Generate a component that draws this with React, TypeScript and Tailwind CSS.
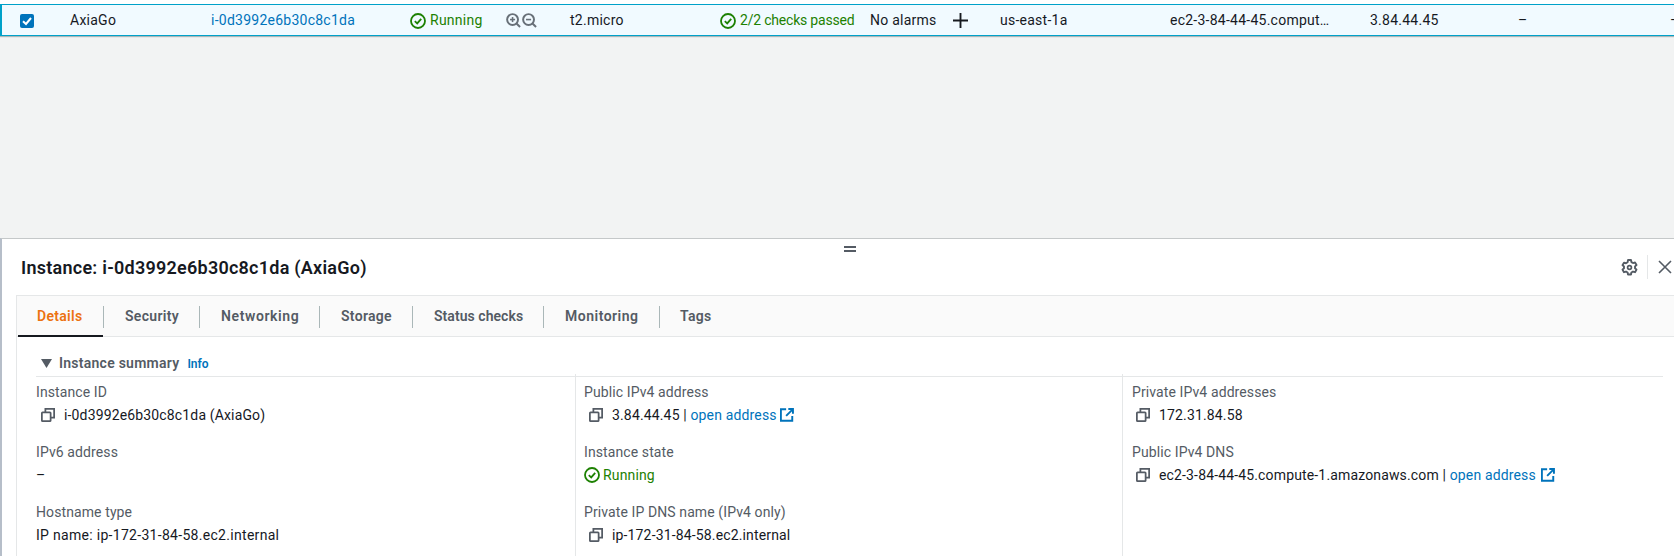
import React from "react";

function CheckCircle({ className = "" }: { className?: string }) {
  return (
    <svg viewBox="0 0 16 16" className={className} fill="none" stroke="currentColor" strokeWidth="1.8">
      <circle cx="8" cy="8" r="7" />
      <path d="M4.8 8.2 7.2 10.4 11.2 5.8" strokeWidth="1.8" />
    </svg>
  );
}

function Zoom({ minus }: { minus?: boolean }) {
  return (
    <svg viewBox="0 0 16 16" className="w-[15px] h-[15px] text-[#687078]" fill="none" stroke="currentColor" strokeWidth="2.1">
      <circle cx="7" cy="7" r="5.8" />
      <path d="M11.2 11.2 15 15" />
      <path d="M4.3 7h5.4" strokeWidth="1.7" />
      {!minus && <path d="M7 4.3v5.4" strokeWidth="1.7" />}
    </svg>
  );
}

function Copy() {
  return (
    <svg viewBox="0 0 16 16" className="w-[14px] h-[14px] text-[#545b64] shrink-0" fill="none" stroke="currentColor" strokeWidth="2">
      <rect x="1" y="5" width="10" height="10" rx="0.8" />
      <path d="M5 5V1h10v10h-4" />
    </svg>
  );
}

function External() {
  return (
    <svg viewBox="0 0 16 16" className="w-[14px] h-[14px] text-[#0073bb] shrink-0" fill="none" stroke="currentColor" strokeWidth="2.2">
      <path d="M7 1.5H1v13h13V9" />
      <path d="M9.5 1.2h5.3v5.3" />
      <path d="M14.5 1.5 7 9" />
    </svg>
  );
}

function Field({ label, children, tight }: { label: string; children: React.ReactNode; tight?: boolean }) {
  return (
    <div className="h-[60px]">
      <div className="h-[22px] leading-[22px] text-[#545b64] text-[14px] tracking-[0.1px]">{label}</div>
      <div className={`h-[24px] leading-[24px] text-[14px] text-[#16191f] flex items-center whitespace-nowrap ${tight ? "tracking-[0.3px]" : "tracking-[0.15px]"}`}>
        {children}
      </div>
    </div>
  );
}

function CopyValue({ children, pad }: { children: React.ReactNode; pad: string }) {
  return (
    <div className={`flex items-center ${pad}`}>
      <Copy />
      <span className="ml-[9px]">{children}</span>
    </div>
  );
}

const tabs = [
  { name: "Security", cls: "w-[95px] tracking-[0.3px]" },
  { name: "Networking", cls: "w-[119px] tracking-[0.6px]" },
  { name: "Storage", cls: "w-[92px] tracking-[0.3px]" },
  { name: "Status checks", cls: "w-[130px] tracking-[0.05px]" },
  { name: "Monitoring", cls: "w-[115px] tracking-[0.5px]" },
];

export default function App() {
  return (
    <div className="w-[1674px] h-[556px] overflow-hidden bg-[#f2f3f3] flex flex-col font-[Roboto,sans-serif] text-[14px] text-[#16191f]">
      <div className="h-[4px] bg-white shrink-0" />
      <div className="h-[32px] shrink-0 pt-[1px] grid grid-cols-[68px_141px_199px_160px_150px_150px_130px_170px_200px_148px_152px_4px] items-center bg-[#f1faff] border-y border-l-2 border-[#00a1c9] shadow-[0_1px_1px_#aab7b8] whitespace-nowrap tracking-[0.25px]">
        <div className="pl-[18px]">
          <div className="w-[14px] h-[14px] rounded-[2px] bg-[#0073bb] flex items-center justify-center">
            <svg viewBox="0 0 14 14" className="w-[14px] h-[14px]" fill="none" stroke="white" strokeWidth="2">
              <path d="M3 7.2 6 10 11 4" />
            </svg>
          </div>
        </div>
        <div>AxiaGo</div>
        <div className="text-[#0073bb]">i-0d3992e6b30c8c1da</div>
        <div className="flex items-center">
          <div className="w-[96px] flex items-center text-[#1d8102]">
            <CheckCircle className="w-[16px] h-[16px]" />
            <span className="ml-[4px]">Running</span>
          </div>
          <div className="flex items-center gap-[1px]">
            <Zoom />
            <Zoom minus />
          </div>
        </div>
        <div>t2.micro</div>
        <div className="w-[135px] overflow-hidden flex items-center text-[#1d8102] tracking-[-0.2px]">
          <CheckCircle className="w-[16px] h-[16px] shrink-0" />
          <span className="ml-[4px]">2/2 checks passed</span>
        </div>
        <div className="flex items-center">
          <span className="w-[83px]">No alarms</span>
          <svg viewBox="0 0 16 16" className="w-[15px] h-[15px]" fill="none" stroke="#16191f" strokeWidth="2">
            <path d="M0 8h16M8 0v16" />
          </svg>
        </div>
        <div>us-east-1a</div>
        <div>ec2-3-84-44-45.comput…</div>
        <div>3.84.44.45</div>
        <div>–</div>
        <div>–</div>
      </div>

      <div className="flex-1" />

      <div className="h-[318px] shrink-0 bg-white border-t border-[#c5c8c9] border-l-2 border-l-[#b6bec9] flex flex-col relative">
        <div className="absolute left-[842px] top-[7px] w-[12px] h-[6px] border-y-2 border-[#545b64]" />
        <div className="h-[56px] shrink-0 flex items-center pl-[19px] pr-[2px]">
          <div className="flex-1 text-[18px] font-semibold tracking-[0.25px]">Instance: i-0d3992e6b30c8c1da (AxiaGo)</div>
          <svg viewBox="0 0 16 16" className="w-[17px] h-[17px] text-[#545b64]" fill="none" stroke="currentColor">
            <path strokeWidth="1.8" strokeLinejoin="round" d="M6.6 1h2.8l.4 1.9 1.5.9 1.9-.6 1.4 2.4-1.4 1.3v1.8l1.4 1.3-1.4 2.4-1.9-.6-1.5.9-.4 1.9H6.6l-.4-1.9-1.5-.9-1.9.6-1.4-2.4 1.4-1.3V7.1L1.4 5.8l1.4-2.4 1.9.6 1.5-.9z" />
            <circle cx="8" cy="8" r="1.8" strokeWidth="1.6" />
          </svg>
          <div className="w-px h-[24px] bg-[#e5e7e8] ml-[9px] mr-[10px]" />
          <svg viewBox="0 0 14 14" className="w-[14px] h-[14px] text-[#545b64]" fill="none" stroke="currentColor" strokeWidth="1.6">
            <path d="M1 1l12 12M13 1 1 13" />
          </svg>
        </div>

        <div className="flex-1 ml-[14px] border-l border-[#e5e7e8] flex flex-col">
          <div className="h-[42px] shrink-0 bg-[#fafafa] border-y border-[#e5e7e8] flex items-center pt-[1px] font-semibold text-[#545b64] tracking-[0.3px]">
            <div className="relative h-full flex items-center pl-[20px] w-[86px] text-[#ec7211]">
              Details
              <div className="absolute left-[1px] right-0 bottom-[-1px] h-[2px] bg-[#16191f]" />
            </div>
            {tabs.map((t) => (
              <React.Fragment key={t.name}>
                <div className="w-px h-[22px] bg-[#aab7b8] shrink-0" />
                <div className={`pl-[21px] whitespace-nowrap ${t.cls}`}>{t.name}</div>
              </React.Fragment>
            ))}
            <div className="w-px h-[22px] bg-[#aab7b8] shrink-0" />
            <div className="pl-[20px]">Tags</div>
          </div>

          <div className="ml-[19px] mr-[11px] flex-1 flex flex-col">
            <div className="h-[40px] shrink-0 flex items-center border-b border-[#e5e7e8] pl-[5px] pt-[14px]">
              <svg viewBox="0 0 11 9" className="w-[11px] h-[9px] text-[#545b64]">
                <path d="M0 0h11L5.5 9z" fill="currentColor" />
              </svg>
              <span className="ml-[7px] font-semibold text-[#545b64] tracking-[0.25px]">Instance summary</span>
              <span className="ml-[8px] text-[12px] font-semibold text-[#0073bb]">Info</span>
            </div>
            <div className="flex-1 grid grid-cols-[539px_547px_1fr] -mt-[3px]">
              <div className="pt-[7px]">
                <Field label="Instance ID">
                  <CopyValue pad="pl-[5px]">i-0d3992e6b30c8c1da (AxiaGo)</CopyValue>
                </Field>
                <Field label="IPv6 address">–</Field>
                <Field label="Hostname type" tight>
                  IP name: ip-172-31-84-58.ec2.internal
                </Field>
              </div>
              <div className="pt-[7px] pl-[8px] border-l border-[#e5e7e8]">
                <Field label="Public IPv4 address">
                  <CopyValue pad="pl-[5px]">
                    3.84.44.45 | <span className="text-[#0073bb]">open address</span>
                  </CopyValue>
                  <span className="ml-[3px]">
                    <External />
                  </span>
                </Field>
                <Field label="Instance state">
                  <CheckCircle className="w-[16px] h-[16px] text-[#1d8102]" />
                  <span className="ml-[3px] text-[#1d8102]">Running</span>
                </Field>
                <Field label="Private IP DNS name (IPv4 only)">
                  <CopyValue pad="pl-[5px]">ip-172-31-84-58.ec2.internal</CopyValue>
                </Field>
              </div>
              <div className="pt-[7px] pl-[9px] border-l border-[#e5e7e8]">
                <Field label="Private IPv4 addresses">
                  <CopyValue pad="pl-[4px]">172.31.84.58</CopyValue>
                </Field>
                <Field label="Public IPv4 DNS">
                  <CopyValue pad="pl-[4px]">
                    ec2-3-84-44-45.compute-1.amazonaws.com | <span className="text-[#0073bb]">open address</span>
                  </CopyValue>
                  <span className="ml-[5px]">
                    <External />
                  </span>
                </Field>
              </div>
            </div>
          </div>
        </div>
      </div>
    </div>
  );
}
